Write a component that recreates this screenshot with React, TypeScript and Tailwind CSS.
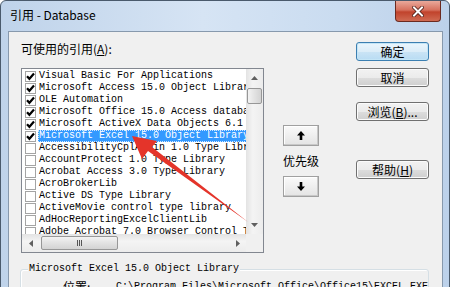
import React from "react";

const refs = [
  { name: "Visual Basic For Applications", on: true },
  { name: "Microsoft Access 15.0 Object Library", on: true },
  { name: "OLE Automation", on: true },
  { name: "Microsoft Office 15.0 Access database engine Object Library", on: true },
  { name: "Microsoft ActiveX Data Objects 6.1 Library", on: true },
  { name: "Microsoft Excel 15.0 Object Library", on: true, selected: true },
  { name: "AccessibilityCplAdmin 1.0 Type Library", on: false },
  { name: "AccountProtect 1.0 Type Library", on: false },
  { name: "Acrobat Access 3.0 Type Library", on: false },
  { name: "AcroBrokerLib", on: false },
  { name: "Active DS Type Library", on: false },
  { name: "ActiveMovie control type library", on: false },
  { name: "AdHocReportingExcelClientLib", on: false },
  { name: "Adobe Acrobat 7.0 Browser Control Type Library", on: false },
];

const cjk = { fontFamily: '"Noto Sans CJK SC", "Liberation Sans", sans-serif' };
const mono = { fontFamily: '"Liberation Mono", "Noto Sans CJK SC", monospace' };

function Check({ on }: { on: boolean }) {
  return (
    <div className="ml-[3px] mt-[1px] w-[11px] h-[11px] border border-[#a4a4a4] bg-white flex items-center justify-center shrink-0">
      {on && (
        <svg width="9" height="9" viewBox="0 0 9 9">
          <path d="M1 4.2 L3.4 6.8 L8 1.6" stroke="#000" strokeWidth="2.2" fill="none" />
        </svg>
      )}
    </div>
  );
}

function WinButton({ children, primary }: { children: React.ReactNode; primary?: boolean }) {
  return (
    <div
      className={
        "h-[19px] w-[73px] rounded-[3px] border flex items-center justify-center text-[12px] leading-none text-black " +
        (primary
          ? "border-[#3c7fb1] bg-[linear-gradient(#eaf6fd_0%,#dcedf8_50%,#cbe4f5_50%,#b8dcf3_100%)] shadow-[inset_0_0_0_1px_#c4e5f6]"
          : "border-[#707070] bg-[linear-gradient(#f2f2f2_0%,#ebebeb_50%,#dddddd_50%,#cfcfcf_100%)] shadow-[inset_0_0_0_1px_#fbfbfb]")
      }
      style={cjk}
    >
      {children}
    </div>
  );
}

function PrioButton({ down }: { down?: boolean }) {
  return (
    <div className="h-[21px] w-[36px] border border-[#a0a0a0] bg-[linear-gradient(#fafafa,#e4e4e4)] shadow-[inset_-1px_-1px_0_#c8c8c8,inset_1px_1px_0_#ffffff] flex items-center justify-center">
      <svg width="8" height="9" viewBox="0 0 8 9" className={down ? "rotate-180" : ""}>
        <path d="M4 0 L8 4.5 L5.3 4.5 L5.3 9 L2.7 9 L2.7 4.5 L0 4.5 Z" fill="#000" />
      </svg>
    </div>
  );
}

export default function App() {
  return (
    <div className="relative w-[450px] h-[287px] overflow-hidden bg-white">
      <div className="w-[450px] flex flex-col rounded-t-[6px] border border-[#4a5a6c] bg-[linear-gradient(90deg,#bfd3ea_0%,#d6e4f4_45%,#cadcf0_75%,#bcd1ea_100%)]">
        {/* title bar */}
        <div className="h-[30px] flex items-start shrink-0">
          <div className="ml-[9px] mt-[6px] text-[12px] leading-[16px] text-black" style={cjk}>
            引用 - Database
          </div>
          <div className="ml-auto mr-[8px] w-[46px] h-[21px] rounded-b-[4px] border border-t-0 border-[#6b2a20] bg-[linear-gradient(#e9a99b_0%,#d6715e_45%,#c1432c_55%,#cf6a52_100%)] flex items-center justify-center">
            <svg width="12" height="11" viewBox="0 0 12 11">
              <path d="M2 1.5 L10 9.5 M10 1.5 L2 9.5" stroke="#4a1a12" strokeWidth="3.6" strokeLinecap="square" />
              <path d="M2 1.5 L10 9.5 M10 1.5 L2 9.5" stroke="#ffffff" strokeWidth="2" strokeLinecap="square" />
            </svg>
          </div>
        </div>

        {/* client */}
        <div className="ml-[7px] mr-[6px] h-[290px] shrink-0 border border-[#8799ad] bg-[#f0f0f0] flex flex-col">
          <div className="flex pt-[10px] shrink-0">
            {/* left: list */}
            <div className="ml-[12px] w-[243px] flex flex-col shrink-0">
              <div className="h-[14px] shrink-0 text-[12px] leading-[14px] text-black" style={cjk}>
                可使用的引用(<span className="underline">A</span>):
              </div>
              <div className="mt-[12px] h-[185px] shrink-0 border border-[#828790] bg-white flex flex-col">
                <div className="flex h-[165px] shrink-0">
                  <div className="flex-1 overflow-hidden pt-[1px]">
                    {refs.map((r) => (
                      <div key={r.name} className="flex h-[12px]">
                        <Check on={r.on} />
                        <div
                          className={
                            "ml-[2px] pl-[1px] flex-1 whitespace-nowrap text-[10px] leading-[12px] " +
                            (r.selected
                              ? "bg-[#3399ff] text-white outline-1 outline-dotted outline-[#cfe6ff] -outline-offset-1"
                              : "text-black")
                          }
                          style={mono}
                        >
                          {r.name}
                        </div>
                      </div>
                    ))}
                  </div>
                  {/* vertical scrollbar */}
                  <div className="w-[17px] shrink-0 bg-[linear-gradient(90deg,#e3e3e3,#f4f4f4_40%,#ececec)] flex flex-col items-center">
                    <svg width="7" height="4" viewBox="0 0 7 4" className="mt-[7px]">
                      <path d="M0 4 L3.5 0 L7 4 Z" fill="#606060" />
                    </svg>
                    <div className="mt-[8px] w-[15px] h-[16px] rounded-[2px] border border-[#979797] bg-[linear-gradient(90deg,#f3f3f3,#e2e2e2_50%,#d3d3d3)]" />
                    <svg width="7" height="4" viewBox="0 0 7 4" className="mt-auto mb-[7px]">
                      <path d="M0 0 L3.5 4 L7 0 Z" fill="#606060" />
                    </svg>
                  </div>
                </div>
                {/* horizontal scrollbar */}
                <div className="flex h-[18px] shrink-0">
                  <div className="flex-1 bg-[linear-gradient(#e3e3e3,#f4f4f4_40%,#ececec)] flex items-center">
                    <svg width="4" height="7" viewBox="0 0 4 7" className="ml-[7px]">
                      <path d="M4 0 L0 3.5 L4 7 Z" fill="#606060" />
                    </svg>
                    <div className="ml-[8px] w-[77px] h-[14px] rounded-[2px] border border-[#979797] bg-[linear-gradient(#f3f3f3,#e2e2e2_50%,#d3d3d3)] flex items-center justify-center gap-[1px]">
                      <div className="w-[1px] h-[6px] bg-[#555]" />
                      <div className="w-[1px] h-[6px] bg-[#555]" />
                      <div className="w-[1px] h-[6px] bg-[#555]" />
                    </div>
                    <svg width="4" height="7" viewBox="0 0 4 7" className="ml-auto mr-[6px]">
                      <path d="M0 0 L4 3.5 L0 7 Z" fill="#606060" />
                    </svg>
                  </div>
                  <div className="w-[17px] bg-[#f0f0f0]" />
                </div>
              </div>
            </div>

            {/* middle: priority */}
            <div className="ml-[19px] w-[36px] flex flex-col items-start shrink-0">
              <div className="mt-[83px]">
                <PrioButton />
              </div>
              <div className="mt-[8px] h-[14px] text-[12px] leading-[14px] text-black whitespace-nowrap" style={cjk}>
                优先级
              </div>
              <div className="mt-[8px]">
                <PrioButton down />
              </div>
            </div>

            {/* right: buttons */}
            <div className="ml-[37px] w-[73px] flex flex-col shrink-0">
              <WinButton primary>确定</WinButton>
              <div className="mt-[7px]">
                <WinButton>取消</WinButton>
              </div>
              <div className="mt-[15px]">
                <WinButton>
                  浏览(<span className="underline">B</span>)...
                </WinButton>
              </div>
              <div className="mt-[39px]">
                <WinButton>
                  帮助(<span className="underline">H</span>)
                </WinButton>
              </div>
            </div>
          </div>

          {/* group box */}
          <div className="ml-[11px] mt-[16px] w-[409px] h-[60px] shrink-0 rounded-[3px] border border-[#d5dfe5] shadow-[inset_1px_1px_0_#ffffff]">
            <div className="-mt-[7px] ml-[7px] w-fit px-[1px] bg-[#f0f0f0] text-[10px] leading-[12px] text-black" style={mono}>
              Microsoft Excel 15.0 Object Library
            </div>
            <div className="mt-[6px] ml-[42px] flex text-[10px] leading-[12px] text-black whitespace-nowrap" style={mono}>
              <span className="w-[58px] text-[12px]" style={cjk}>位置:</span>
              <span>C:\Program Files\Microsoft Office\Office15\EXCEL.EXE</span>
            </div>
          </div>
        </div>
      </div>

      {/* red annotation arrow */}
      <svg className="absolute left-0 top-0 pointer-events-none" width="450" height="287" viewBox="0 0 450 287">
        <polygon
          points="132,136 157,141 152,147 248,222 148,151 142,159"
          fill="#e4342a"
        />
      </svg>
    </div>
  );
}
